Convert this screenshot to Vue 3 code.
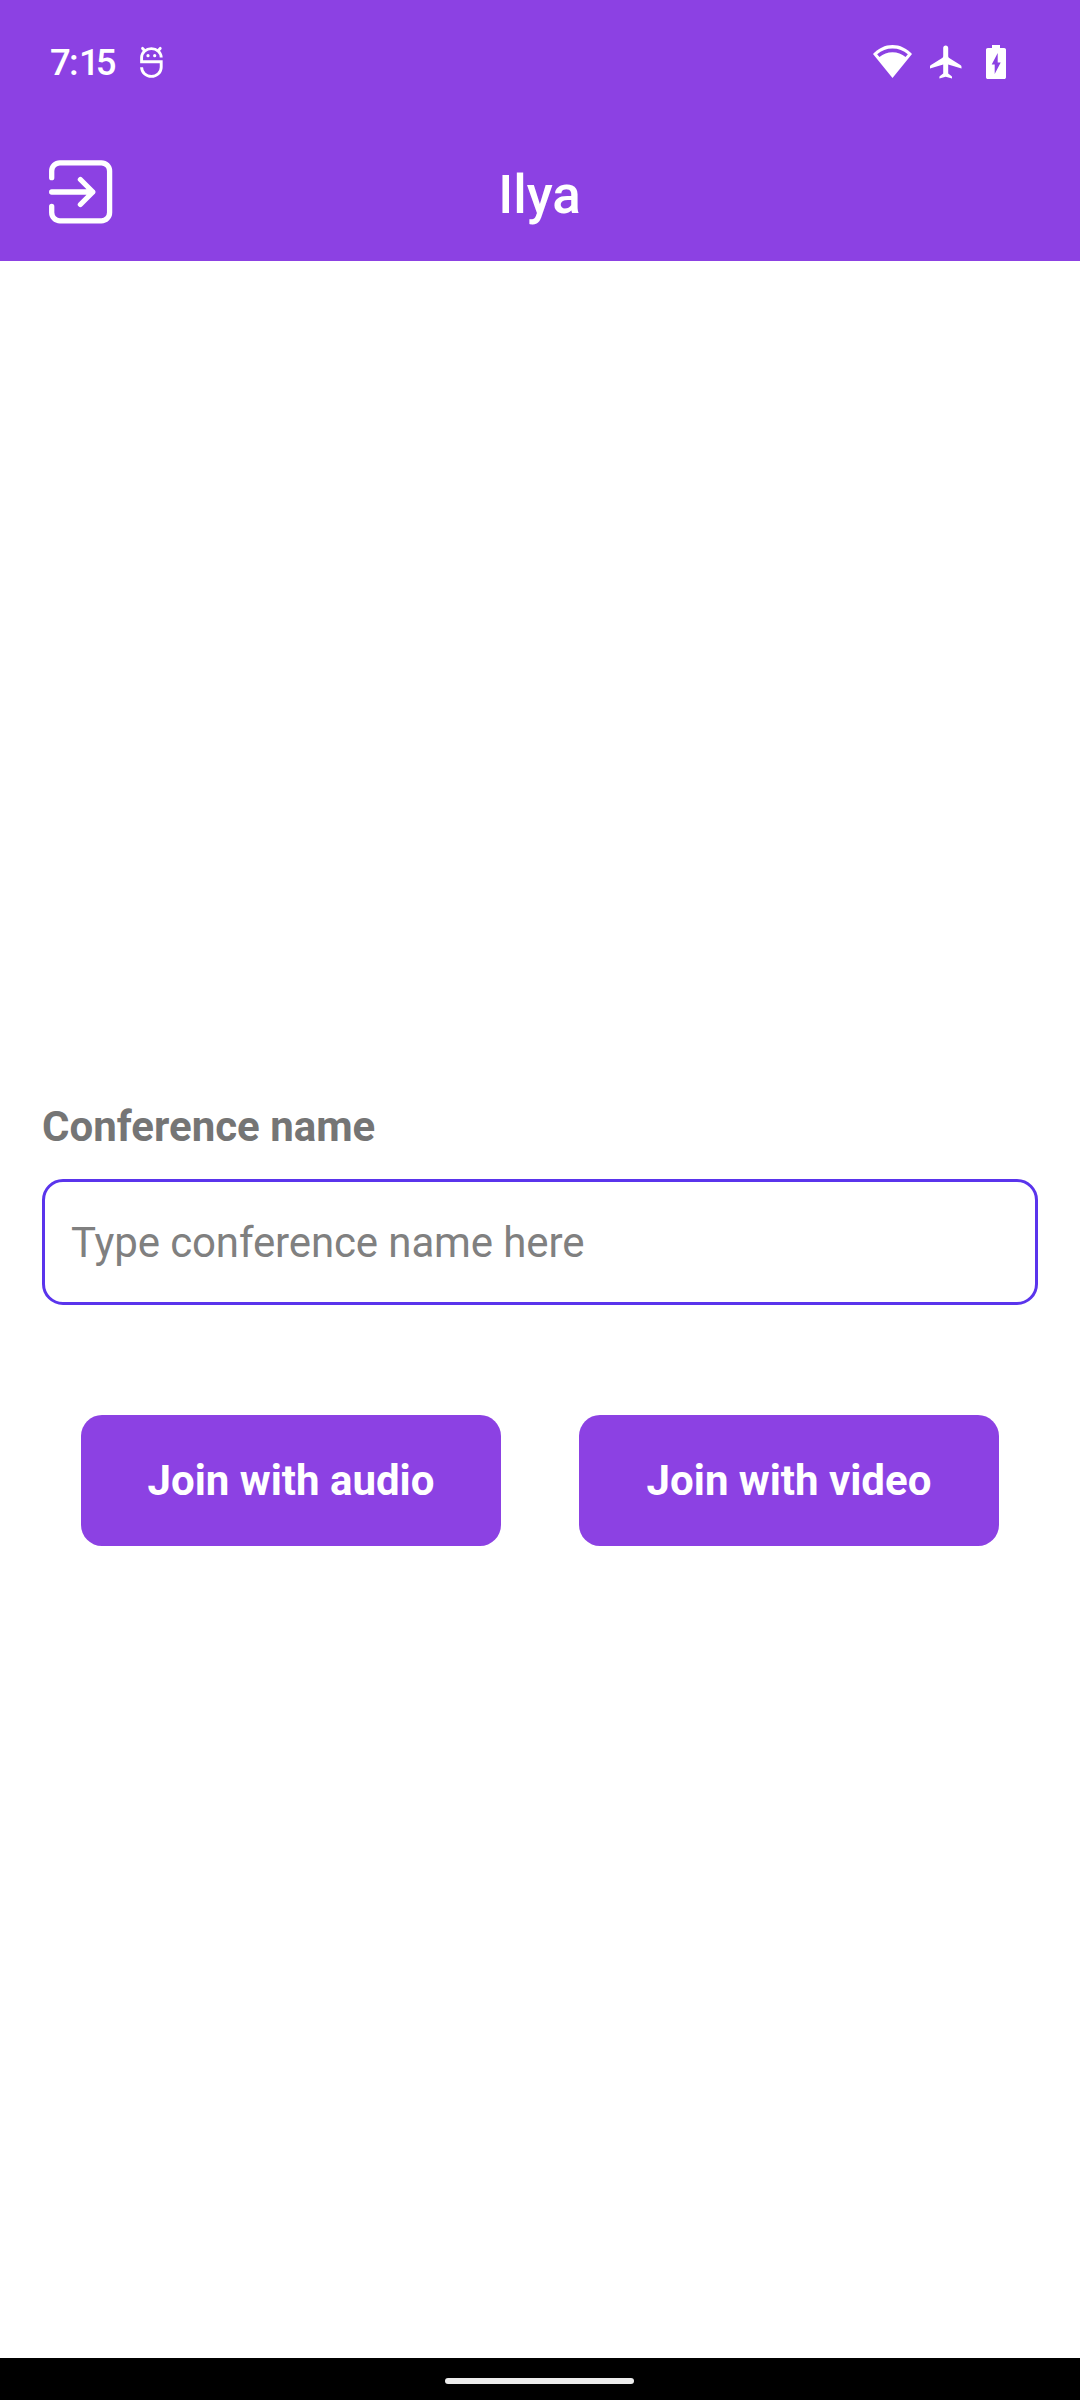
<script setup>
import { ref } from 'vue'

const userName = 'Ilya'
const conference = ref('')
const actions = ['Join with audio', 'Join with video']
</script>

<template>
  <div class="screen">
    <header class="header">
      <div class="status">
        <div class="group">
          <span class="clock">7<span class="colon">:</span><span class="one">1</span>5</span>
          <svg class="mug" width="28" height="38" viewBox="0 0 28 38" fill="none" stroke="#fff" stroke-width="2.900">
            <path d="M23.200 14.600A9.800 9 0 0 0 3.600 14.600V18.700h19.600v5.500a9.800 9.200 0 0 1-19.600 0" />
            <path d="M6.800 7.800 4.600 5.400M20 7.800l2.200-2.400" stroke-linecap="round" />
            <circle cx="10" cy="12.700" r="1.600" fill="#fff" stroke="none" />
            <circle cx="16.700" cy="12.700" r="1.600" fill="#fff" stroke="none" />
          </svg>
        </div>
        <div class="group">
          <svg width="40" height="36" viewBox="0 0 40 36">
            <path d="M19.500 34 0 10C5.300 4.400 12 1 19.500 1S33.700 4.400 39 10Z" fill="#fff" />
            <path d="M5.300 11.600C9.300 8.200 14.200 6.400 19.500 6.400s10.200 1.800 14.200 5.200" fill="none" stroke="#8c41e3" stroke-width="3.600" />
          </svg>
          <svg class="plane" width="32" height="36" viewBox="0 0 32 36">
            <path d="M15.700 1.500c1.500 0 2.500 1 2.500 2.500v8.200c0 .8.300 1.300 1 1.800l11.200 6.900c.7.500 1.100 1 1.100 1.800v1.800l-13.300-4v9l3.200 2.400c.5.400.6.700.6 1.200v1.300l-6.300-1.700-6.300 1.700v-1.300c0-.5.100-.8.600-1.200l3.200-2.400v-9l-13.300 4v-1.800c0-.8.400-1.300 1.100-1.800L12.200 14c.7-.5 1-1 1-1.800V4c0-1.500 1-2.500 2.500-2.500Z" fill="#fff" />
          </svg>
          <svg class="battery" width="20" height="36" viewBox="0 0 20 36">
            <path d="M6 1h8v3h4.200c1 0 1.800.8 1.800 1.800v27.400c0 1-.8 1.800-1.800 1.800H1.800C.8 35 0 34.200 0 33.200V5.800C0 4.800.8 4 1.800 4H6Z" fill="#fff" />
            <path d="M11.700 9v9.500h3L8.700 30v-9.500h-3Z" fill="#8c41e3" />
          </svg>
        </div>
      </div>
      <div class="toolbar">
        <button class="exit" aria-label="Exit">
          <svg width="64" height="64" viewBox="0 0 64 64" fill="none" stroke="#fff" stroke-width="5.300" stroke-linecap="round" stroke-linejoin="round">
            <path d="M2.700 17.700V11c0-4.600 3.700-8.200 8.200-8.200h41.500c4.500 0 8.200 3.600 8.200 8.200v41.600c0 4.600-3.700 8.200-8.200 8.200H10.900c-4.500 0-8.200-3.600-8.200-8.200v-6.100" />
            <path d="M2.700 32h41M31.400 19.500 43.900 32 31.400 44.500" />
          </svg>
        </button>
        <h1>{{ userName }}</h1>
      </div>
    </header>

    <main class="form">
      <label class="label" for="conference">Conference name</label>
      <input id="conference" v-model="conference" class="field" type="text" placeholder="Type conference name here" />
      <div class="actions">
        <button v-for="action in actions" :key="action" class="join">{{ action }}</button>
      </div>
    </main>

    <footer class="navbar"><div class="handle"></div></footer>
  </div>
</template>

<style>
body {
  margin: 0;
}
</style>

<style scoped>
.screen {
  width: 1080px;
  height: 2400px;
  display: flex;
  flex-direction: column;
  background: #fff;
  font-family: Roboto, "Liberation Sans", sans-serif;
}
.header {
  height: 261px;
  background: #8c41e3;
  color: #fff;
}
.status {
  height: 124px;
  box-sizing: border-box;
  padding: 0 74px 0 50px;
  display: flex;
  justify-content: space-between;
  align-items: center;
}
.group {
  display: flex;
  align-items: center;
}
.clock {
  width: 87.500px;
  padding-top: 2px;
  font-size: 36.500px;
  font-weight: 500;
  line-height: 44px;
  letter-spacing: -1.700px;
}
.colon {
  letter-spacing: 0.200px;
}
.one {
  letter-spacing: -4px;
}
.plane {
  margin-left: 17px;
}
.battery {
  margin-left: 24px;
}
.toolbar {
  height: 137px;
  display: grid;
  grid-template-columns: 64px 1fr 64px;
  padding: 0 49px;
}
button {
  border: 0;
  padding: 0;
  font-family: inherit;
}
.exit {
  width: 64px;
  height: 64px;
  margin-top: 36px;
  background: none;
}
.exit svg {
  display: block;
}
h1 {
  margin: 40px 1px 0 0;
  font-size: 53px;
  line-height: 62px;
  font-weight: 500;
  text-align: center;
}
.form {
  flex: 1;
  display: flex;
  flex-direction: column;
  padding: 841px 42px 0;
}
.label {
  font-size: 42px;
  line-height: 49px;
  font-weight: 700;
  color: #757575;
}
.field {
  height: 126px;
  box-sizing: border-box;
  margin: 28px 0 0;
  padding: 0 26px;
  border: 3px solid #5a34ec;
  border-radius: 21px;
  outline: none;
  background: #fff;
  font-family: inherit;
  font-size: 42px;
  letter-spacing: -0.120px;
}
.field::placeholder {
  color: #808080;
  opacity: 1;
}
.actions {
  display: flex;
  justify-content: space-around;
  margin-top: 110px;
}
.join {
  width: 420px;
  height: 131px;
  border-radius: 21px;
  background: #8c41e3;
  color: #fff;
  font-size: 42px;
  font-weight: 700;
}
.navbar {
  height: 42px;
  box-sizing: border-box;
  padding-right: 1px;
  display: flex;
  justify-content: center;
  background: #000;
}
.handle {
  width: 189px;
  height: 6px;
  margin-top: 20px;
  border-radius: 3px;
  background: #ececec;
}
</style>
